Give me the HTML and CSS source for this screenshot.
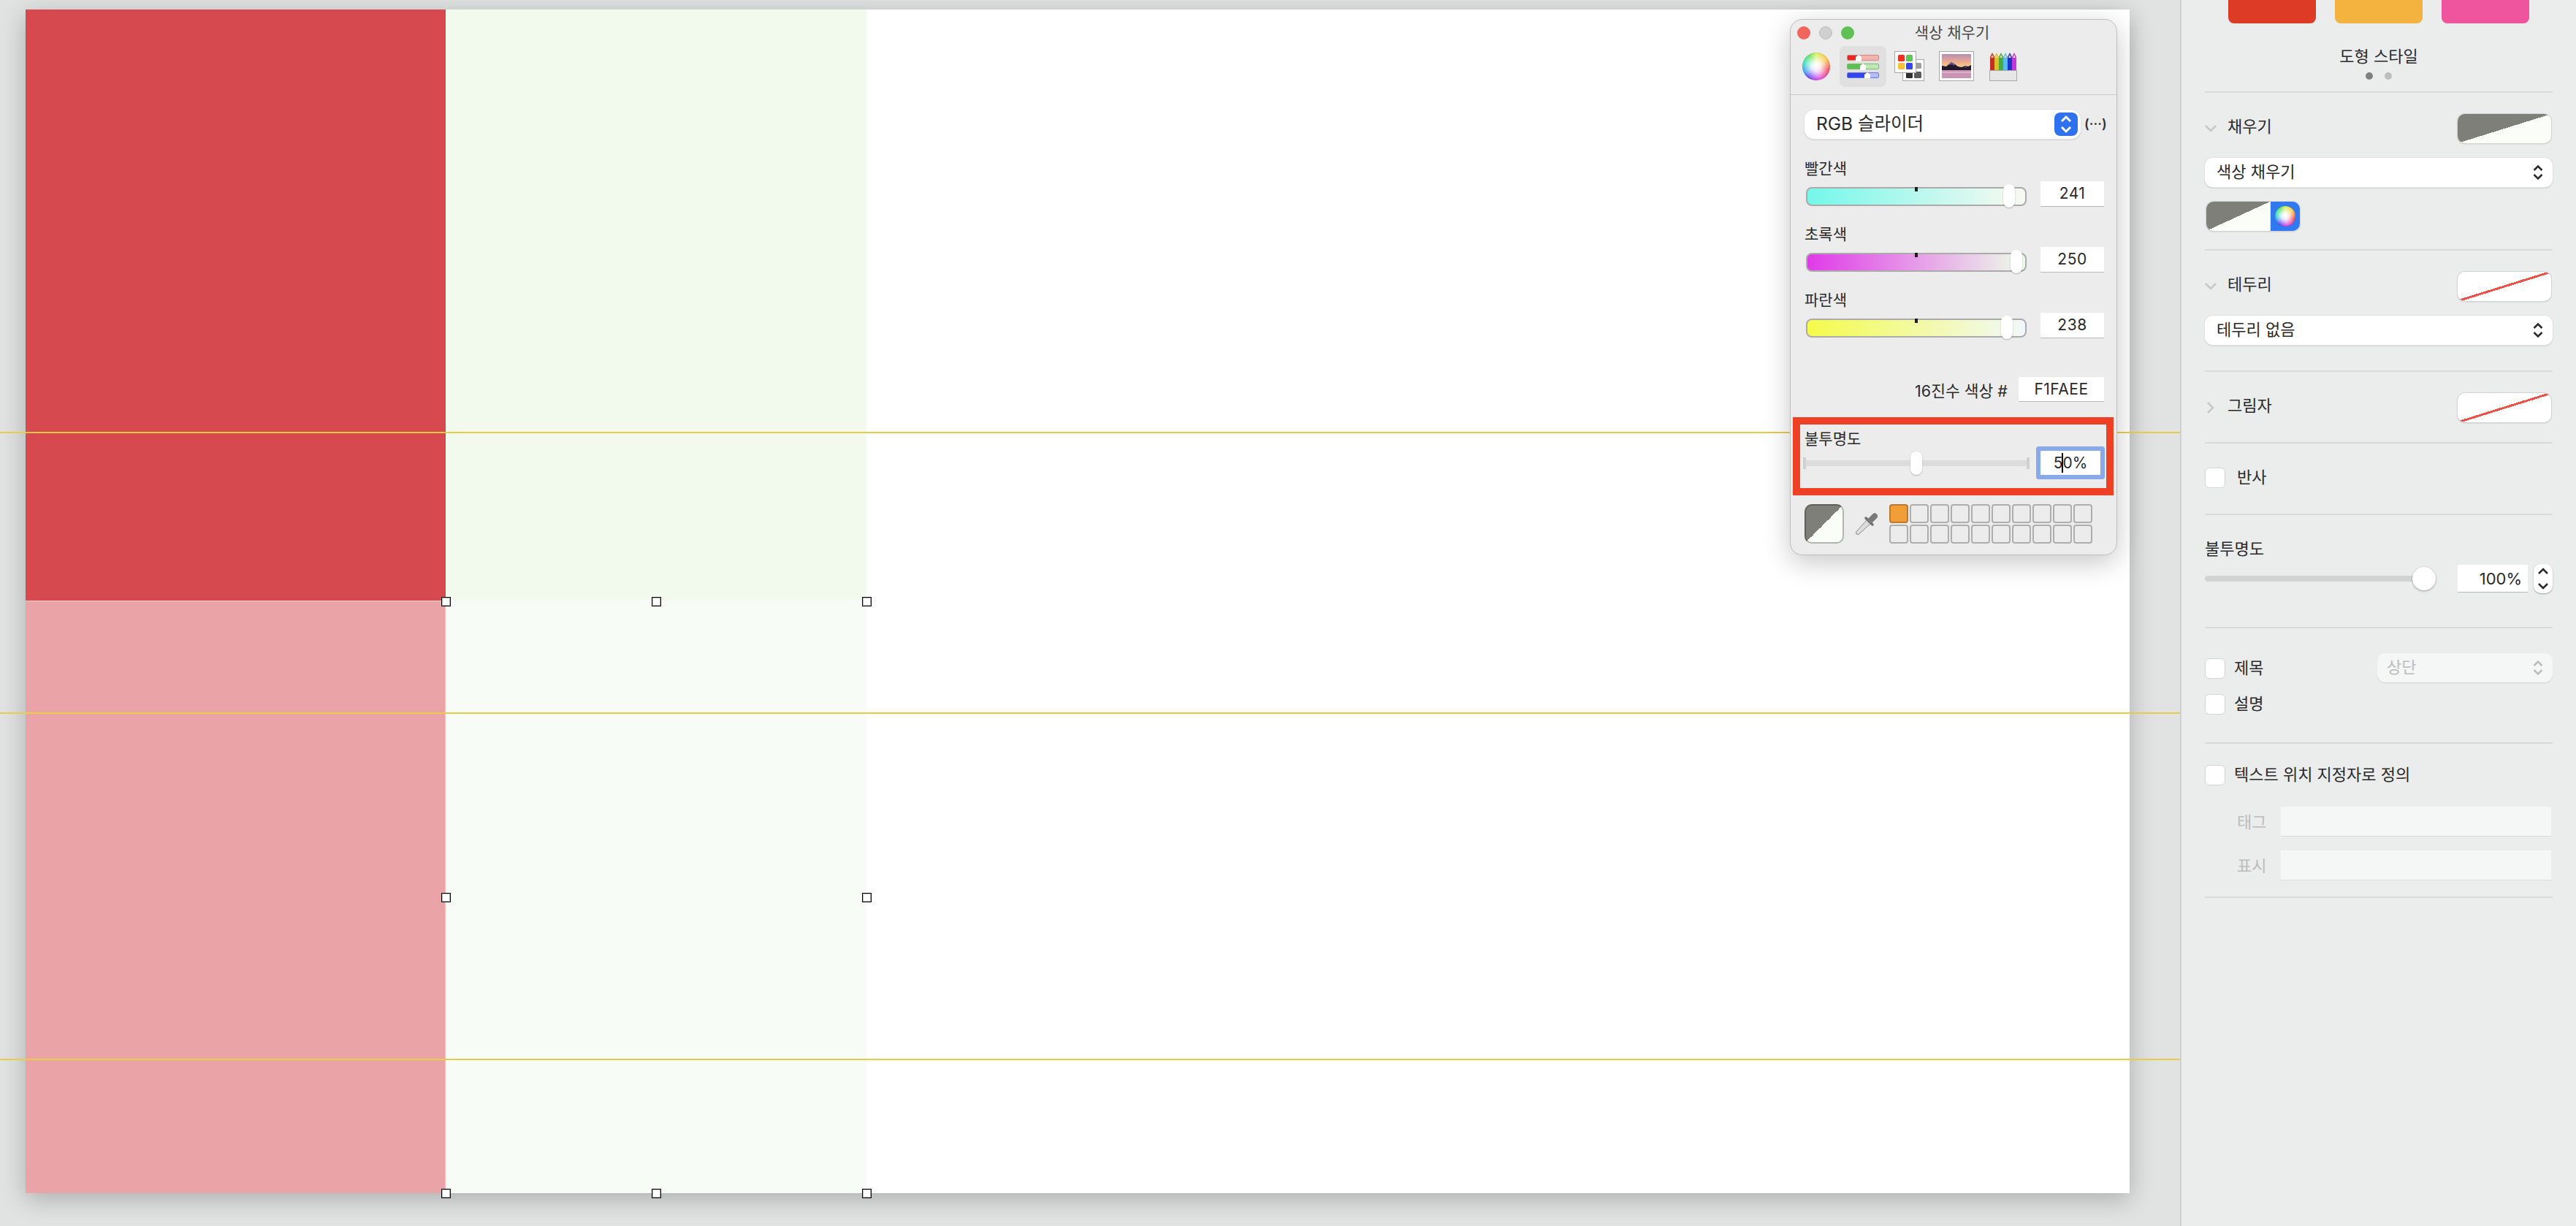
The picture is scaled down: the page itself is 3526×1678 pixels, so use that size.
FILE: index.html
```html
<!DOCTYPE html>
<html lang="ko">
<head>
<meta charset="utf-8">
<title>색상 채우기</title>
<link rel="stylesheet" href="styles.css">
</head>
<body>
<div class="app">
  <main class="workspace">
    <div class="canvas">
      <div class="cell red"></div>
      <div class="cell green"></div>
      <div class="cell blank"></div>
      <div class="cell red-soft"></div>
      <div class="cell green-soft">
        <i class="handle hl ht"></i><i class="handle hc ht"></i><i class="handle hr ht"></i>
        <i class="handle hl hm"></i><i class="handle hr hm"></i>
        <i class="handle hl hb"></i><i class="handle hc hb"></i><i class="handle hr hb"></i>
      </div>
      <div class="cell blank"></div>
    </div>
    <i class="guide g1"></i><i class="guide g2"></i><i class="guide g3"></i>
  </main>

  <aside class="inspector">
    <div class="styles">
      <div class="style-row">
        <span class="style-chip chip-red"></span>
        <span class="style-chip chip-orange"></span>
        <span class="style-chip chip-pink"></span>
      </div>
      <div class="styles-title">도형 스타일</div>
      <div class="dots"><i class="dot on"></i><i class="dot"></i></div>
    </div>

    <section class="section s-fill">
      <div class="head">
        <span class="head-left">
          <svg class="chev" viewBox="0 0 16 16"><path d="M1 4l7 7 7-7"/></svg>
          <span class="head-label">채우기</span>
        </span>
        <span class="well diag"></span>
      </div>
      <div class="select"><span>색상 채우기</span>
        <svg class="updown" viewBox="0 0 14 22"><path d="M1.5 8L7 2.5 12.500 8M1.500 14L7 19.500 12.500 14"/></svg>
      </div>
      <div class="combo"><span class="combo-color diag"></span><span class="combo-wheel"><i class="wheel small"></i></span></div>
    </section>

    <section class="section s-border">
      <div class="head">
        <span class="head-left">
          <svg class="chev" viewBox="0 0 16 16"><path d="M1 4l7 7 7-7"/></svg>
          <span class="head-label">테두리</span>
        </span>
        <span class="well none"></span>
      </div>
      <div class="select"><span>테두리 없음</span>
        <svg class="updown" viewBox="0 0 14 22"><path d="M1.5 8L7 2.5 12.500 8M1.500 14L7 19.500 12.500 14"/></svg>
      </div>
    </section>

    <section class="section s-shadow">
      <div class="head">
        <span class="head-left">
          <svg class="chev" viewBox="0 0 16 16"><path d="M4 1l7 7-7 7"/></svg>
          <span class="head-label">그림자</span>
        </span>
        <span class="well none"></span>
      </div>
    </section>

    <section class="section s-reflect">
      <label class="check"><i class="box"></i><span class="reflect-text">반사</span></label>
    </section>

    <section class="section s-opacity">
      <div class="op-label">불투명도</div>
      <div class="op-row">
        <div class="op-track"><i class="op-knob"></i></div>
        <div class="op-input">100%</div>
        <div class="stepper">
          <svg viewBox="0 0 26 20"><path d="M7 13l6-6 6 6"/></svg>
          <svg viewBox="0 0 26 20"><path d="M7 7l6 6 6-6"/></svg>
        </div>
      </div>
    </section>

    <section class="section s-caption">
      <div class="cap-row">
        <label class="check cap-first"><i class="box"></i><span>제목</span></label>
        <div class="select disabled"><span>상단</span>
          <svg class="updown" viewBox="0 0 14 22"><path d="M1.5 8L7 2.5 12.500 8M1.500 14L7 19.500 12.500 14"/></svg>
        </div>
      </div>
      <label class="check cap-second"><i class="box"></i><span>설명</span></label>
    </section>

    <section class="section s-custom">
      <label class="check"><i class="box"></i><span>텍스트 위치 지정자로 정의</span></label>
      <div class="field first"><span>태그</span><i class="field-box"></i></div>
      <div class="field"><span>표시</span><i class="field-box"></i></div>
    </section>
  </aside>

  <section class="color-panel">
    <header class="panel-title">
      <div class="lights"><i class="light l-red"></i><i class="light l-gray"></i><i class="light l-green"></i></div>
      <div class="title-text">색상 채우기</div>
      <div></div>
    </header>
    <nav class="tabs">
      <span class="tab-wheel"><i class="wheel"></i></span>
      <span class="tab-selected">
        <svg class="ico-sliders" viewBox="0 0 44 32">
          <rect x=".5" y=".5" width="43" height="7" rx="1.500" fill="#f3b4b0" stroke="#d9837c"/>
          <rect x=".5" y="12.500" width="43" height="7" rx="1.500" fill="#bfe8b4" stroke="#78bd6c"/>
          <rect x=".5" y="24.500" width="43" height="7" rx="1.500" fill="#b3bcf8" stroke="#6a76e8"/>
          <rect x="1" y="1" width="15" height="6" fill="#e8281e"/>
          <rect x="1" y="13" width="21" height="6" fill="#5ec050"/>
          <rect x="1" y="25" width="27" height="6" fill="#3246ee"/>
          <path d="M16 0l4 3v6h-8V3zM22 12l4 3v6h-8v-6zM28 24l4 3v6h-8v-6z" fill="#fff"/>
        </svg>
      </span>
      <svg class="ico-palette" viewBox="0 0 41 41">
        <rect x="11.500" y="11.500" width="29" height="29" fill="#fff" stroke="#a8a8a8"/>
        <rect x="29" y="16" width="8" height="8" rx="1.500" fill="#a0a0a0"/>
        <rect x="16" y="28" width="9" height="9" rx="1.500" fill="#303030"/>
        <rect x="27" y="28" width="10" height="9" rx="1.500" fill="#5c5c5c"/>
        <rect x=".5" y=".5" width="29" height="29" fill="#fff" stroke="#a8a8a8"/>
        <rect x="5" y="5" width="9" height="9" rx="1.500" fill="#ef2f20"/>
        <rect x="16" y="5" width="9" height="9" rx="1.500" fill="#5fc652"/>
        <rect x="5" y="16" width="9" height="9" rx="1.500" fill="#f8c13c"/>
        <rect x="16" y="16" width="9" height="9" rx="1.500" fill="#3a45ee"/>
      </svg>
      <svg class="ico-image" viewBox="0 0 48 41">
        <defs>
          <linearGradient id="sky" x1="0" y1="0" x2="0" y2="1">
            <stop offset="0" stop-color="#b58fb6"/><stop offset=".55" stop-color="#eba98f"/><stop offset="1" stop-color="#f8d48e"/>
          </linearGradient>
        </defs>
        <rect x=".5" y=".5" width="47" height="40" fill="#fff" stroke="#a8a8a8"/>
        <rect x="4" y="4" width="40" height="33" fill="#c895b5"/>
        <rect x="4" y="4" width="40" height="19" fill="url(#sky)"/>
        <path d="M4 20l6 1 7-6 5 3 4 3 5 1 5-2 4 1 4-2v7H4z" fill="#231b2c"/>
        <path d="M17 15l-4 4 5-1 3 2 1-2zM38 21l-4 1 3 1z" fill="#6a5a98"/>
        <rect x="4" y="28" width="40" height="2" fill="#dcb0c6"/>
      </svg>
      <svg class="ico-pencils" viewBox="0 0 38 40">
        <path d="M1 25V7l3-6 3 6v18z" fill="#c42d26"/><path d="M7 25V7l3-6 3 6v18z" fill="#d9c02c"/>
        <path d="M13 25V7l3-6 3 6v18z" fill="#48ab3c"/><path d="M19 25V7l3-6 3 6v18z" fill="#54bdec"/>
        <path d="M25 25V7l3-6 3 6v18z" fill="#1e33c8"/><path d="M31 25V7l3-6 3 6v18z" fill="#c238d8"/>
        <path d="M2 8l2-4 2 4zM8 8l2-4 2 4zM14 8l2-4 2 4zM20 8l2-4 2 4zM26 8l2-4 2 4zM32 8l2-4 2 4z" fill="#efcfa6"/>
        <rect x=".5" y="25.500" width="37" height="14" fill="#e6e6e6" stroke="#a8a8a8"/>
      </svg>
    </nav>

    <div class="panel-body">
      <div class="popup">
        <span class="popup-text">RGB 슬라이더</span>
        <span class="popup-btn"><svg viewBox="0 0 32 32"><path d="M10 12l6-6 6 6M10 20l6 6 6-6"/></svg></span>
      </div>
      <span class="more">(···)</span>

      <div class="channel first-channel">
        <div class="ch-label">빨간색</div>
        <div class="ch-row">
          <div class="ch-track t-red"><i class="tick"></i><i class="ch-knob" style="left:268px"></i></div>
          <div class="num">241</div>
        </div>
      </div>
      <div class="channel">
        <div class="ch-label">초록색</div>
        <div class="ch-row">
          <div class="ch-track t-green"><i class="tick"></i><i class="ch-knob" style="left:278px"></i></div>
          <div class="num">250</div>
        </div>
      </div>
      <div class="channel">
        <div class="ch-label">파란색</div>
        <div class="ch-row">
          <div class="ch-track t-blue"><i class="tick"></i><i class="ch-knob" style="left:265px"></i></div>
          <div class="num">238</div>
        </div>
      </div>

      <div class="hex-row"><span>16진수 색상 #</span><div class="num hex">F1FAEE</div></div>

      <div class="opacity">
        <div class="ch-label">불투명도</div>
        <div class="opacity-row">
          <div class="op-slider"><i class="stop"></i><i class="line"></i><i class="stop"></i><i class="slider-knob"></i></div>
          <div class="focus-input">5<i class="caret"></i>0%</div>
        </div>
      </div>
    </div>

    <footer class="panel-foot">
      <span class="current diag"></span>
      <svg class="dropper" viewBox="0 0 30 30">
        <path d="M1 29l-.5-3L15 10l5 5L4 29.500z" fill="#dcdcdc" stroke="#8c8c8c" stroke-width="1"/>
        <path d="M14 7l9 9" stroke="#717171" stroke-width="3.500" stroke-linecap="round"/>
        <path d="M20 10.500l6-6" stroke="#7a7a7a" stroke-width="8" stroke-linecap="round"/>
      </svg>
      <div class="wells">
        <i class="cell-well filled"></i><i class="cell-well"></i><i class="cell-well"></i><i class="cell-well"></i><i class="cell-well"></i>
        <i class="cell-well"></i><i class="cell-well"></i><i class="cell-well"></i><i class="cell-well"></i><i class="cell-well"></i>
        <i class="cell-well"></i><i class="cell-well"></i><i class="cell-well"></i><i class="cell-well"></i><i class="cell-well"></i>
        <i class="cell-well"></i><i class="cell-well"></i><i class="cell-well"></i><i class="cell-well"></i><i class="cell-well"></i>
      </div>
    </footer>
    <div class="callout"></div>
  </section>
</div>
</body>
</html>
```
FILE: styles.css
```css
* { box-sizing: border-box; }
html, body { margin: 0; padding: 0; }
body {
  width: 3526px;
  height: 1678px;
  overflow: hidden;
  font-family: Inter, "Noto Sans CJK KR", sans-serif;
  color: #2a2a2a;
}
i { display: block; font-style: normal; }

.app { position: relative; display: flex; width: 3526px; height: 1678px; }

/* workspace */
.workspace {
  position: relative;
  width: 2984px;
  height: 100%;
  background: #e1e3e2;
  padding: 13px 0 0 35px;
}
.canvas {
  display: grid;
  grid-template-columns: 575px 576px 1729px;
  grid-template-rows: 809px 811px;
  width: 2880px;
  height: 1620px;
  background: #fff;
  box-shadow: 0 8px 32px rgba(0, 0, 0, .24);
}
.red { background: #d64a4f; }
.green { background: #f2faee; }
.blank { background: #fff; }
.red-soft { background: #eaa3a6; border-top: 1px solid #f4d2d3; border-right: 1px solid #f2c6c8; }
.green-soft { position: relative; background: #f7fcf6; border-top: 1px solid #fff; border-left: 1px solid #e8e9e7; }
.handle {
  position: absolute;
  width: 13px;
  height: 13px;
  background: #fff;
  border: 1px solid #000;
  box-shadow: inset 0 0 0 1px rgba(0, 0, 0, .3);
  z-index: 2;
}
.hl { left: -7px; } .hc { left: 281px; } .hr { left: 569px; }
.ht { top: -6px; } .hm { top: 399px; } .hb { top: 804px; }
.guide { position: absolute; left: 0; width: 2984px; height: 2px; background: #e8cc48; }
.g1 { top: 591px; } .g2 { top: 975px; } .g3 { top: 1449px; }

/* inspector */
.inspector {
  width: 542px;
  height: 100%;
  background: #ebecec;
  border-left: 2px solid #cfd0d0;
  padding: 0 32px;
  font-size: 22px;
}
.styles { border-bottom: 2px solid #d9dada; height: 127px; }
.style-row { display: flex; justify-content: center; gap: 26px; }
.style-chip { width: 120px; height: 32px; border-radius: 0 0 8px 8px; }
.chip-red { background: #dd3b25; }
.chip-orange { background: #f4b23f; }
.chip-pink { background: #ee559e; }
.styles-title { margin-top: 30px; text-align: center; line-height: 30px; }
.dots { display: flex; justify-content: center; gap: 16px; margin-top: 7px; }
.dot { width: 10px; height: 10px; border-radius: 50%; background: #bdbdbd; }
.dot.on { background: #808080; }

.section { border-bottom: 2px solid #d9dada; }
.s-fill { padding: 29px 0 25px; }
.s-border { padding: 29px 0 35px; }
.s-shadow { padding: 29px 0 27px; }
.s-reflect { padding: 33px 0 35px; }
.s-opacity { padding: 31px 0 46px; }
.s-caption { padding: 34px 0 38px; }
.s-custom { padding: 29px 0 22px; }

.head { display: flex; justify-content: space-between; height: 40px; align-items: center; }
.head-left { display: flex; align-items: center; padding-bottom: 6px; line-height: 30px; }
.chev { width: 16px; height: 16px; margin-right: 15px; fill: none; stroke: #c6c7c7; stroke-width: 2.500; margin-top: 6px; }
.well, .combo {
  width: 128px;
  height: 40px;
  border-radius: 10px;
  box-shadow: 0 0 0 1px #d3d4d4, 0 1px 2px rgba(0, 0, 0, .25);
  margin-right: 2px;
  overflow: hidden;
}
.diag { background: linear-gradient(to bottom right, #7e7f79 50%, #fbfdf8 50%); }
.none {
  background: linear-gradient(to bottom right, #fff calc(50% - 1.500px), #f25044 calc(50% - 1.500px), #f25044 calc(50% + 1.500px), #fff calc(50% + 1.500px));
}
.select {
  display: flex;
  align-items: center;
  justify-content: space-between;
  height: 40px;
  margin-top: 20px;
  padding: 0 13px 3px 16px;
  background: #fff;
  border-radius: 11px;
  box-shadow: 0 0 0 1px #e0e1e1, 0 1px 2px rgba(0, 0, 0, .3);
  line-height: 30px;
}
.updown { width: 14px; height: 22px; margin-top: 3px; fill: none; stroke: #2a2a2a; stroke-width: 2.500; }
.combo { display: flex; margin: 20px 0 0 2px; }
.combo-color { width: 87px; height: 100%; }
.combo-wheel { display: flex; align-items: center; justify-content: center; width: 40px; margin-left: 1px; background: #3079f0; }

.wheel {
  width: 38px;
  height: 38px;
  border-radius: 50%;
  background:
    radial-gradient(circle at 50% 50%, #fff 0, rgba(255, 255, 255, .85) 25%, rgba(255, 255, 255, 0) 72%),
    conic-gradient(#d8f050, #f8c040 55deg, #f04050 105deg, #e040e0 165deg, #6040f0 215deg, #30a0f0 250deg, #30e0b0 290deg, #60e050 330deg, #d8f050);
  box-shadow: inset 0 0 1px rgba(0, 0, 0, .4);
}
.wheel.small { width: 28px; height: 28px; }

.check { display: flex; align-items: center; height: 28px; line-height: 28px; }
.box {
  width: 28px;
  height: 28px;
  margin-right: 12px;
  background: #fff;
  border: 1px solid #d3d4d4;
  border-radius: 6px;
}
.check span { padding-bottom: 2px; }
.reflect-text { margin-left: 4px; }

.op-label { line-height: 30px; }
.op-row { display: flex; align-items: center; height: 40px; margin-top: 6px; }
.op-track { position: relative; width: 316px; height: 8px; border-radius: 4px; background: #d2d3d3; }
.op-knob {
  position: absolute;
  left: 284px;
  top: -12px;
  width: 32px;
  height: 32px;
  border-radius: 50%;
  background: #fff;
  box-shadow: 0 1px 3px rgba(0, 0, 0, .35);
}
.op-input {
  width: 96px;
  height: 38px;
  margin-left: 30px;
  padding-right: 8px;
  line-height: 38px;
  text-align: right;
  background: #fff;
  border-bottom: 1px solid #b9b9b9;
}
.stepper {
  display: flex;
  flex-direction: column;
  width: 26px;
  height: 40px;
  margin-left: 8px;
  background: #fff;
  border-radius: 10px;
  box-shadow: 0 1px 2px rgba(0, 0, 0, .3);
}
.stepper svg { width: 26px; height: 20px; fill: none; stroke: #2a2a2a; stroke-width: 2.500; }

.cap-row { display: flex; justify-content: space-between; align-items: center; height: 40px; }
.cap-first { margin-top: 2px; }
.select.disabled {
  width: 240px;
  margin-top: 0;
  padding-left: 13px;
  background: #f5f6f6;
  color: #bcbcbc;
  box-shadow: 0 1px 1px rgba(0, 0, 0, .12);
}
.disabled .updown { stroke: #bcbcbc; }
.cap-second { margin-top: 16px; }
.field { display: flex; align-items: center; height: 41px; margin-top: 19px; padding-left: 44px; color: #bcbcbc; line-height: 30px; }
.field.first { margin-top: 29px; }
.field span { width: 60px; }
.field-box { width: 370px; height: 41px; background: #f5f6f6; border-bottom: 1px solid #dcdcdc; }

/* colour panel */
.color-panel {
  position: absolute;
  left: 2450px;
  top: 26px;
  width: 448px;
  height: 734px;
  background: #ececec;
  border: 1px solid #bdbdbd;
  border-radius: 17px;
  box-shadow: 0 10px 36px rgba(0, 0, 0, .22);
  font-size: 21px;
}
.panel-title { display: grid; grid-template-columns: 1fr auto 1fr; align-items: center; height: 36px; padding: 0 0 0 9px; }
.lights { display: flex; gap: 12px; }
.light { width: 18px; height: 18px; border-radius: 50%; }
.l-red { background: #f0665c; }
.l-gray { background: #d0d0d0; border: 1px solid #bcbcbc; }
.l-green { background: #5fc153; }
.title-text { color: #4b4b4b; font-size: 21px; line-height: 36px; margin-right: 13px; }
.tabs {
  display: flex;
  align-items: center;
  height: 67px;
  padding: 0 0 11px 16px;
  border-bottom: 1px solid #cbcbcb;
}
.tab-wheel { width: 38px; height: 38px; }
.tab-selected {
  display: flex;
  align-items: center;
  justify-content: center;
  width: 64px;
  height: 56px;
  margin-left: 13px;
  background: #e0e0e0;
  border-radius: 8px;
}
.ico-sliders { width: 44px; height: 32px; }
.ico-palette { width: 41px; height: 41px; margin-left: 11px; }
.ico-image { width: 48px; height: 41px; margin-left: 20px; }
.ico-pencils { width: 38px; height: 40px; margin-left: 21px; }

.panel-body { position: relative; height: 543px; padding: 20px 17px 0 19px; }
.popup {
  display: flex;
  align-items: center;
  justify-content: space-between;
  width: 378px;
  height: 40px;
  padding: 0 4px 0 16px;
  background: #fff;
  border-radius: 13px;
  box-shadow: 0 0 0 1px #e2e2e2, 0 1px 2px rgba(0, 0, 0, .3);
  font-size: 24.500px;
}
.popup-text { line-height: 32px; padding-bottom: 3px; }
.popup-btn { width: 32px; height: 32px; background: #2f72f0; border-radius: 8px; }
.popup-btn svg { display: block; width: 32px; height: 32px; fill: none; stroke: #fff; stroke-width: 3; }
.more { position: absolute; left: 402px; top: 27px; font-size: 18px; line-height: 26px; font-weight: 600; color: #333; }

.channel { height: 90px; }
.first-channel { margin-top: 26px; }
.ch-label { height: 30px; line-height: 30px; white-space: nowrap; }
.ch-row { display: flex; justify-content: space-between; align-items: flex-start; height: 35px; margin-top: 2px; }
.ch-track {
  position: relative;
  width: 302px;
  height: 26px;
  margin: 8px 0 0 2px;
  border: 2px solid #ababab;
  border-radius: 8px;
}
.t-red { background: linear-gradient(90deg, #75f7ea, #faf9f1); }
.t-green { background: linear-gradient(90deg, #e03ae8, #edfde8); }
.t-blue { background: linear-gradient(90deg, #f4fb4a, #f1f8fb); }
.tick { position: absolute; left: 147px; top: -2px; width: 4px; height: 6px; background: #1d1d1d; }
.ch-knob {
  position: absolute;
  top: -6px;
  width: 16px;
  height: 32px;
  background: #fff;
  border-radius: 8px;
  box-shadow: 0 1px 2px rgba(0, 0, 0, .25);
}
.num {
  width: 87px;
  height: 35px;
  line-height: 33px;
  text-align: center;
  font-size: 21px;
  letter-spacing: .5px;
  background: #fff;
  border-bottom: 1px solid #b9b9b9;
}
.hex-row { display: flex; justify-content: flex-end; align-items: center; gap: 15px; height: 34px; margin-top: 30px; font-size: 21.500px; }
.hex { width: 117px; height: 34px; }

.opacity { margin-top: 36px; }
.opacity-row { display: flex; justify-content: space-between; align-items: center; height: 33px; margin-top: 1px; }
.op-slider { position: relative; display: flex; align-items: center; width: 310px; margin-left: -2px; }
.stop { width: 4px; height: 16px; background: #d0d0d0; }
.line { flex: 1; height: 8px; background: #dcdcdc; }
.slider-knob {
  position: absolute;
  left: 147px;
  top: -8px;
  width: 16px;
  height: 32px;
  background: #fff;
  border-radius: 8px;
  box-shadow: 0 1px 2px rgba(0, 0, 0, .25);
}
.focus-input {
  display: flex;
  align-items: center;
  justify-content: center;
  width: 82px;
  height: 33px;
  margin-right: 5px;
  font-size: 21px;
  background: #fff;
  border-radius: 1px;
  box-shadow: 0 0 0 6px #88aaeb;
}
.caret { width: 2px; height: 27px; margin: 0 -1px; background: #000; }

.panel-foot {
  display: flex;
  height: 84px;
  padding: 16px 0 0 19px;
  border-top: 1px solid #d8d8d8;
}
.current { width: 54px; height: 54px; border-radius: 10px; border: 2px solid #b4b4b0; border-top-color: #5f605b; border-left-color: #5f605b; }
.dropper { width: 30px; height: 30px; margin: 12px 0 0 16px; }
.wells { display: grid; grid-template-columns: repeat(10, 26px); grid-auto-rows: 26px; gap: 2px; margin-left: 16px; }
.cell-well { border: 2px solid #aeaeae; border-radius: 4px; }
.cell-well.filled { background: #f29e38; border-color: #b97a2f; }

.callout {
  position: absolute;
  left: 3px;
  top: 544px;
  width: 439px;
  height: 107px;
  border: 10px solid #ee4025;
}
```
